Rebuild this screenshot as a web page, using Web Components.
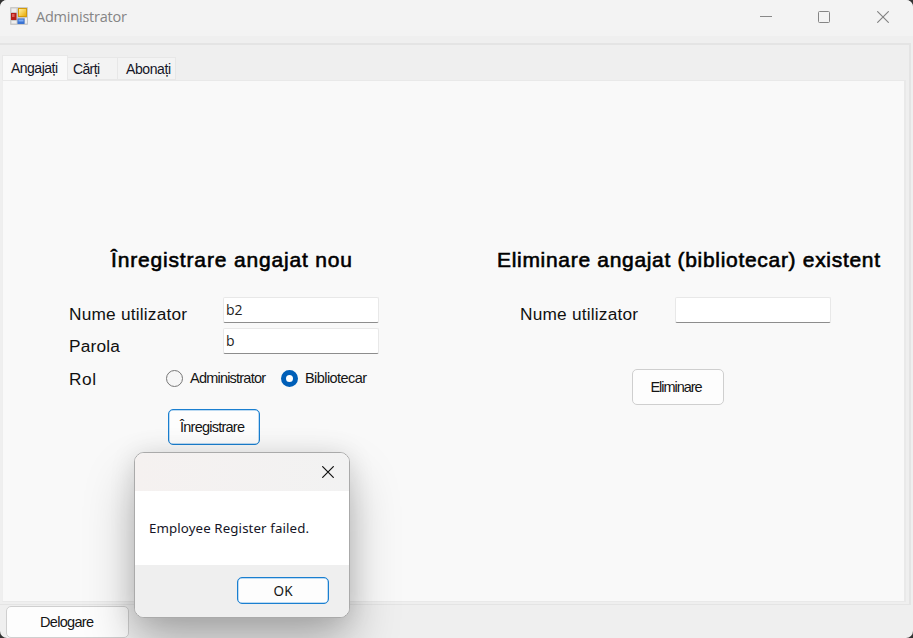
<!DOCTYPE html>
<html lang="ro"><head><meta charset="utf-8"><title>Administrator</title>
<style>
html,body{margin:0;width:913px;height:638px;overflow:hidden;background:#333}
body{font-family:"Liberation Sans",Arial,sans-serif;color:#151515}
</style></head><body>
<admin-window></admin-window>
<script>
const define=(name,html,after)=>customElements.define(name,class extends HTMLElement{
  constructor(){super();const t=document.createElement('template');t.innerHTML=html;
    this.attachShadow({mode:'open'}).append(t.content.cloneNode(true));}
  connectedCallback(){after&&after(this,this.shadowRoot);}
});

/* Single-line label whose tracking is adjusted to fill the given width. */
define('fit-text',`<style>:host{display:block;white-space:pre;line-height:20px}span{display:inline-block}</style><span><slot></slot></span>`,(el,r)=>{
  const s=r.querySelector('span'),n=el.textContent.length,w=+el.getAttribute('w');
  el.style.width=w+'px';
  if(n>1)s.style.letterSpacing=((w-s.getBoundingClientRect().width)/(n-1))+'px';
});

define('title-bar',`<style>
:host{display:flex;height:36px;box-sizing:border-box;background:#f3f3f3;align-items:flex-start;padding:7px 24px 0 10px}
fit-text{font:14.5px/20px "Open Sans",sans-serif;color:#858585;margin-left:8px}
.c{display:flex;margin-left:auto;gap:46px;padding-top:4px}.c svg+svg+svg{margin-left:1px}svg{display:block}
</style>
<svg width="18" height="18" viewBox="0 0 18 18"><defs><linearGradient id="y" x2="1" y2="1"><stop stop-color="#fff0a0"/><stop offset="1" stop-color="#e9ac08"/></linearGradient></defs>
<rect width="18" height="18" rx="1" fill="#c9c9c9"/><path d="M1.5 1.5h5v3.5h-5zM1.5 14h5v2.500h-5zM15 11h2v5.500h-2z" fill="#eee"/>
<rect x="1" y="6" width="5.500" height="7" fill="#b51e18"/><rect x="2" y="7" width="2.500" height="3" fill="#e0605a"/>
<rect x="8" y="1" width="9" height="9" fill="#d49a09"/><rect x="9" y="2" width="7" height="7" fill="url(#y)"/>
<rect x="7.500" y="11.500" width="7" height="5.500" fill="#3972d2"/><rect x="8.500" y="12.500" width="5" height="2" fill="#7eabf3"/></svg>
<fit-text w="91">Administrator</fit-text>
<div class="c"><svg width="12" height="12"><path d="M0 5.500h12" stroke="#888"/></svg>
<svg width="12" height="12"><rect x=".5" y=".5" width="11" height="11" rx="1" fill="none" stroke="#858585"/></svg>
<svg width="12" height="12"><path d="M.3.3l11.400 11.400M11.700.3L.3 11.700" stroke="#808080" stroke-width="1.100"/></svg></div>`);

define('tab-strip',`<style>
:host{display:flex;align-items:flex-end;height:35px;font-size:14px;color:#151526}
div{box-sizing:border-box;background:#f3f3f3;border:1px solid #e7e7e7;border-left:0;height:23px;padding:1px 0 0 5px}
.on{height:25px;background:#f9f9f9;border:1px solid #e8e8e8;border-bottom:0;width:66px;padding:2px 0 0 8px}
</style><div class="on"><fit-text w="47">Angajați</fit-text></div><div style="width:50px"><fit-text w="27">Cărți</fit-text></div><div style="width:58px;padding-left:8px"><fit-text w="45">Abonați</fit-text></div>`);

define('text-box',`<style>:host{display:block;box-sizing:border-box;width:156px;height:26px;background:#fff;border:1px solid #e8e8e8;border-bottom:1px solid #8d8d8d;border-radius:2px;font:14px/23px "Open Sans",sans-serif;color:#222;padding-left:2px}</style><slot></slot>`);

define('push-button',`<style>:host{display:flex;align-items:center;justify-content:center;box-sizing:border-box;width:92px;height:36px;border:1px solid #cfcfcf;border-radius:5px;background:#fdfdfd;font-size:14.500px}
:host([primary]){border:1px solid #1a7fd0;box-shadow:inset 0 0 0 .5px #7cb8e8}</style><slot></slot>`);

define('radio-option',`<style>:host{display:flex;gap:7px;align-items:center;font-size:14.500px}i{box-sizing:border-box;width:17px;height:17px;border:1px solid #777;border-radius:50%;background:#f6f6f6}
:host([checked]) i{border:5px solid #005fb8;background:#fff}</style><i></i><slot></slot>`);

define('register-form',`<style>:host{display:block;width:448px}.h{font-size:21px;line-height:26px;color:#000;-webkit-text-stroke:.6px #000;margin-left:108px}
.r{display:flex;margin-left:66px}.l{font-size:17.300px;color:#111;line-height:22px}text-box{margin-left:auto;margin-right:72px}
</style><fit-text class="h" w="241">Înregistrare angajat nou</fit-text>
<div class="r" style="margin-top:24px;height:31px"><fit-text class="l" style="margin-top:6px" w="118">Nume utilizator</fit-text><text-box>b2</text-box></div>
<div class="r" style="height:31px"><fit-text class="l" style="margin-top:7px" w="51">Parola</fit-text><text-box>b</text-box></div>
<div class="r" style="height:37px;padding-top:8px;box-sizing:border-box"><fit-text class="l" style="margin-top:1px" w="27">Rol</fit-text>
<radio-option style="margin-left:70px;height:22px"><fit-text w="76">Administrator</fit-text></radio-option><radio-option checked style="margin-left:15px;height:22px"><fit-text w="62">Bibliotecar</fit-text></radio-option></div>
<push-button primary style="margin:13px 0 0 165px"><fit-text w="65" style="margin-right:3px">Înregistrare</fit-text></push-button>`);

define('remove-form',`<style>:host{display:block}.h{font-size:21px;line-height:26px;color:#000;-webkit-text-stroke:.6px #000;margin-left:46px}
.r{display:flex;margin:24px 0 0 69px;height:31px}.l{font-size:17.300px;color:#111;line-height:22px;margin-top:6px}text-box{margin-left:36.500px}
</style><fit-text class="h" w="383">Eliminare angajat (bibliotecar) existent</fit-text>
<div class="r"><fit-text class="l" w="118">Nume utilizator</fit-text><text-box></text-box></div>
<push-button style="margin:41px 0 0 181px"><fit-text w="52" style="margin-right:3px">Eliminare</fit-text></push-button>`);

define('message-box',`<style>:host{display:flex;flex-direction:column;box-sizing:border-box;width:216px;height:166px;border:1px solid #aaa;border-radius:10px;overflow:hidden;background:#fff;box-shadow:0 28px 50px rgba(0,0,0,.26),0 2px 26px rgba(0,0,0,.12)}
.t{height:38px;box-sizing:border-box;background:linear-gradient(90deg,#f5f1f0,#f2f2f2);padding:13px 15px 0 0}svg{display:block;margin-left:auto}
.m{height:74px;box-sizing:border-box;padding:27px 0 0 14px;font:13.300px/20px "Noto Sans",sans-serif;color:#151526}
.f{flex:1;background:#efefef;display:flex;justify-content:flex-end;padding:12px 20px 0 0;font-family:"Noto Sans",sans-serif}
push-button{width:92px;height:27px;font-size:13.500px}</style>
<div class="t"><svg width="12" height="12"><path d="M.3.3l11.400 11.400M11.700.3L.3 11.700" stroke="#111" stroke-width="1.200"/></svg></div>
<div class="m"><fit-text w="160">Employee Register failed.</fit-text></div>
<div class="f"><push-button primary><fit-text w="19">OK</fit-text></push-button></div>`);

define('admin-window',`<style>
:host{display:block;position:relative;width:913px;height:638px;background:#efefef;border-radius:7px;overflow:hidden}
.frame{box-sizing:border-box;width:911px;height:562px;margin-top:7px;border:2px solid #e4e4e4;border-left:0;border-bottom-width:1px;border-top-width:2px;padding-left:2px;background:#efefef}
.page{box-sizing:border-box;width:904px;height:522px;background:#f9f9f9;border:1px solid #e9e9e9;border-right-width:2px;border-left-color:#eee;display:flex;padding-top:166px}
.foot{padding:1px 0 0 6px}.foot push-button{width:123px;height:32px}
message-box{position:absolute;left:134px;top:452px}</style>
<title-bar></title-bar><div class="frame"><tab-strip></tab-strip><div class="page"><register-form></register-form><remove-form></remove-form></div></div>
<div class="foot"><push-button><fit-text w="54" style="margin-right:1px;margin-top:-1px">Delogare</fit-text></push-button></div>
<message-box></message-box>`);
</script></body></html>
